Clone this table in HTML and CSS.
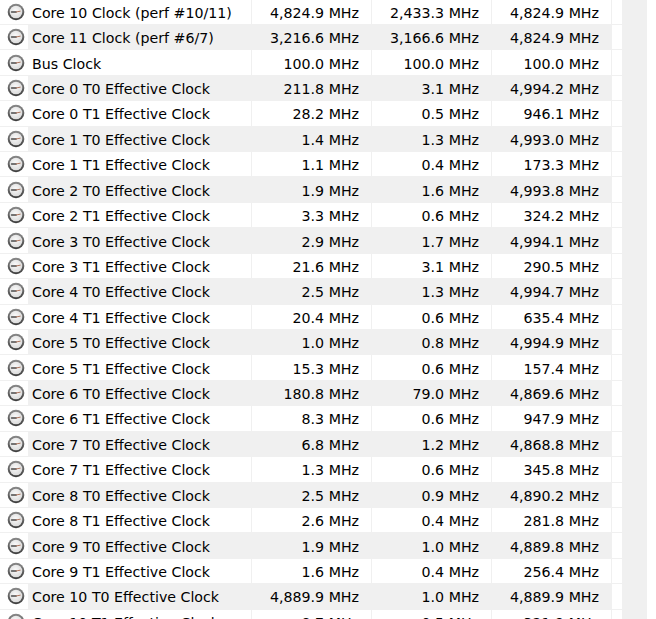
FILE: index.html
```html
<!DOCTYPE html>
<html>
<head>
<meta charset="utf-8">
<link rel="stylesheet" href="styles.css">
</head>
<body>
<div class="window">
  <div class="list" id="list"></div>
  <div class="scrollbar"></div>
  <div class="edge"></div>
</div>
<script src="app.js"></script>
</body>
</html>
```

FILE: styles.css
```css
html, body {
  margin: 0;
  padding: 0;
  background: #ffffff;
  overflow: hidden;
}
.window {
  display: flex;
  width: 656px;
  height: 619px;
  overflow: hidden;
}
.list {
  width: 622px;
  flex: none;
  display: flex;
  flex-direction: column;
  margin-top: -0.5px;
}
.row {
  display: grid;
  grid-template-columns: 28px 224px 120px 120px 120px 10px;
  height: 25.43px;
  flex: none;
  box-sizing: border-box;
  border-bottom: 1px solid #f0f0f0;
  font-family: "DejaVu Sans", Tahoma, sans-serif;
  font-size: 14.2px;
  color: #000;
}
.cell {
  display: flex;
  align-items: center;
  padding-top: 2px;
  white-space: nowrap;
  overflow: hidden;
  box-sizing: border-box;
  border-right: 1px solid #f0f0f0;
}
.icon {
  border-right: none;
  justify-content: flex-start;
  padding-left: 7px;
  padding-top: 0;
}
.name {
  padding-left: 4px;
}
.val {
  justify-content: flex-end;
  padding-right: 12px;
}
.row.alt .name,
.row.alt .val {
  background: #f0f0f0;
}
.extra {
  border-right: none;
}
.scrollbar {
  width: 25px;
  flex: none;
  background: #f0f0f0;
}
.edge {
  flex: 1;
  background: #ffffff;
}
```

FILE: app.js
```js
const rows = [
  ["Core 10 Clock (perf #10/11)", "4,824.9 MHz", "2,433.3 MHz", "4,824.9 MHz"],
  ["Core 11 Clock (perf #6/7)", "3,216.6 MHz", "3,166.6 MHz", "4,824.9 MHz"],
  ["Bus Clock", "100.0 MHz", "100.0 MHz", "100.0 MHz"],
  ["Core 0 T0 Effective Clock", "211.8 MHz", "3.1 MHz", "4,994.2 MHz"],
  ["Core 0 T1 Effective Clock", "28.2 MHz", "0.5 MHz", "946.1 MHz"],
  ["Core 1 T0 Effective Clock", "1.4 MHz", "1.3 MHz", "4,993.0 MHz"],
  ["Core 1 T1 Effective Clock", "1.1 MHz", "0.4 MHz", "173.3 MHz"],
  ["Core 2 T0 Effective Clock", "1.9 MHz", "1.6 MHz", "4,993.8 MHz"],
  ["Core 2 T1 Effective Clock", "3.3 MHz", "0.6 MHz", "324.2 MHz"],
  ["Core 3 T0 Effective Clock", "2.9 MHz", "1.7 MHz", "4,994.1 MHz"],
  ["Core 3 T1 Effective Clock", "21.6 MHz", "3.1 MHz", "290.5 MHz"],
  ["Core 4 T0 Effective Clock", "2.5 MHz", "1.3 MHz", "4,994.7 MHz"],
  ["Core 4 T1 Effective Clock", "20.4 MHz", "0.6 MHz", "635.4 MHz"],
  ["Core 5 T0 Effective Clock", "1.0 MHz", "0.8 MHz", "4,994.9 MHz"],
  ["Core 5 T1 Effective Clock", "15.3 MHz", "0.6 MHz", "157.4 MHz"],
  ["Core 6 T0 Effective Clock", "180.8 MHz", "79.0 MHz", "4,869.6 MHz"],
  ["Core 6 T1 Effective Clock", "8.3 MHz", "0.6 MHz", "947.9 MHz"],
  ["Core 7 T0 Effective Clock", "6.8 MHz", "1.2 MHz", "4,868.8 MHz"],
  ["Core 7 T1 Effective Clock", "1.3 MHz", "0.6 MHz", "345.8 MHz"],
  ["Core 8 T0 Effective Clock", "2.5 MHz", "0.9 MHz", "4,890.2 MHz"],
  ["Core 8 T1 Effective Clock", "2.6 MHz", "0.4 MHz", "281.8 MHz"],
  ["Core 9 T0 Effective Clock", "1.9 MHz", "1.0 MHz", "4,889.8 MHz"],
  ["Core 9 T1 Effective Clock", "1.6 MHz", "0.4 MHz", "256.4 MHz"],
  ["Core 10 T0 Effective Clock", "4,889.9 MHz", "1.0 MHz", "4,889.9 MHz"],
  ["Core 10 T1 Effective Clock", "8.7 MHz", "0.5 MHz", "321.9 MHz"]
];

const icon = '<svg width="18" height="18" viewBox="0 0 18 18">' +
  '<defs>' +
  '<linearGradient id="rg" x1="0" y1="0" x2="0" y2="1"><stop offset="0" stop-color="#8a8a8a"/><stop offset="1" stop-color="#3c3c3c"/></linearGradient>' +
  '<radialGradient id="fg" cx="0.45" cy="0.4" r="0.7"><stop offset="0" stop-color="#fafafa"/><stop offset="1" stop-color="#d6d6d6"/></radialGradient>' +
  '</defs>' +
  '<circle cx="9" cy="9" r="8.3" fill="url(#rg)"/>' +
  '<circle cx="9" cy="9" r="6.3" fill="url(#fg)"/>' +
  '<line x1="4.5" y1="9" x2="9.2" y2="9" stroke="#4a4a4a" stroke-width="1.3" stroke-linecap="round"/>' +
  '<line x1="9" y1="9" x2="13.2" y2="8.2" stroke="#a86a50" stroke-width="0.9" stroke-linecap="round"/>' +
  '</svg>';

const list = document.getElementById('list');
rows.forEach((r, i) => {
  const row = document.createElement('div');
  row.className = 'row' + (i % 2 === 1 ? ' alt' : '');
  row.innerHTML =
    '<div class="cell icon">' + icon + '</div>' +
    '<div class="cell name">' + r[0] + '</div>' +
    '<div class="cell val">' + r[1] + '</div>' +
    '<div class="cell val">' + r[2] + '</div>' +
    '<div class="cell val">' + r[3] + '</div>' +
    '<div class="cell extra"></div>';
  list.appendChild(row);
});
```
